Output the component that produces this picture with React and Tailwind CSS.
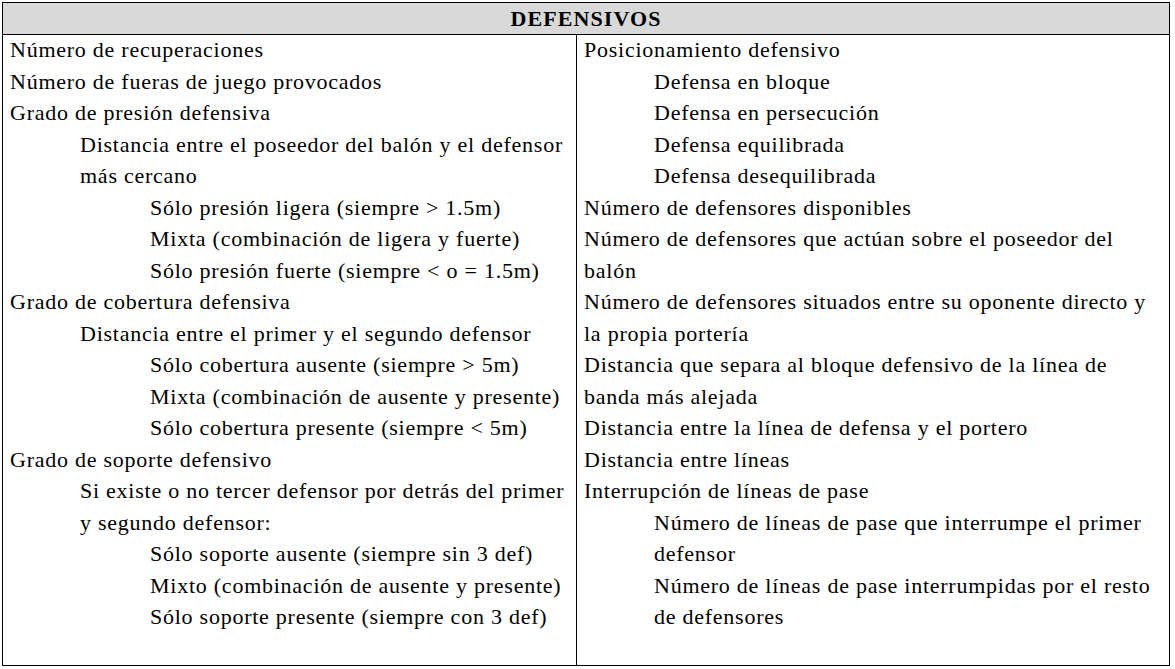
const left = [
  { lvl: 0, lines: ['Número de recuperaciones'] },
  { lvl: 0, lines: ['Número de fueras de juego provocados'] },
  { lvl: 0, lines: ['Grado de presión defensiva'] },
  { lvl: 1, lines: ['Distancia entre el poseedor del balón y el defensor', 'más cercano'] },
  { lvl: 2, lines: ['Sólo presión ligera (siempre > 1.5m)'] },
  { lvl: 2, lines: ['Mixta (combinación de ligera y fuerte)'] },
  { lvl: 2, lines: ['Sólo presión fuerte (siempre < o = 1.5m)'] },
  { lvl: 0, lines: ['Grado de cobertura defensiva'] },
  { lvl: 1, lines: ['Distancia entre el primer y el segundo defensor'] },
  { lvl: 2, lines: ['Sólo cobertura ausente (siempre > 5m)'] },
  { lvl: 2, lines: ['Mixta (combinación de ausente y presente)'] },
  { lvl: 2, lines: ['Sólo cobertura presente (siempre < 5m)'] },
  { lvl: 0, lines: ['Grado de soporte defensivo'] },
  { lvl: 1, lines: ['Si existe o no tercer defensor por detrás del primer', 'y segundo defensor:'] },
  { lvl: 2, lines: ['Sólo soporte ausente (siempre sin 3 def)'] },
  { lvl: 2, lines: ['Mixto (combinación de ausente y presente)'] },
  { lvl: 2, lines: ['Sólo soporte presente (siempre con 3 def)'] },
];

const right = [
  { lvl: 0, lines: ['Posicionamiento defensivo'] },
  { lvl: 1, lines: ['Defensa en bloque'] },
  { lvl: 1, lines: ['Defensa en persecución'] },
  { lvl: 1, lines: ['Defensa equilibrada'] },
  { lvl: 1, lines: ['Defensa desequilibrada'] },
  { lvl: 0, lines: ['Número de defensores disponibles'] },
  { lvl: 0, lines: ['Número de defensores que actúan sobre el poseedor del', 'balón'] },
  { lvl: 0, lines: ['Número de defensores situados entre su oponente directo y', 'la propia portería'] },
  { lvl: 0, lines: ['Distancia que separa al bloque defensivo de la línea de', 'banda más alejada'] },
  { lvl: 0, lines: ['Distancia entre la línea de defensa y el portero'] },
  { lvl: 0, lines: ['Distancia entre líneas'] },
  { lvl: 0, lines: ['Interrupción de líneas de pase'] },
  { lvl: 1, lines: ['Número de líneas de pase que interrumpe el primer', 'defensor'] },
  { lvl: 1, lines: ['Número de líneas de pase interrumpidas por el resto', 'de defensores'] },
];

const indent = ['pl-0', 'pl-[70px]', 'pl-[140px]'];

const Column = ({ items, className }) => (
  <div className={`flex flex-col pl-[7px] ${className}`}>
    {items.map((item, i) => (
      <div key={i} className={indent[item.lvl]}>
        {item.lines.map((line) => (
          <div key={line} className="whitespace-nowrap h-[31.5px] leading-[29.5px]">
            {line}
          </div>
        ))}
      </div>
    ))}
  </div>
);

export default function App() {
  return (
    <div className="w-[1175px] h-[669px] bg-white p-[2px] font-['Liberation_Serif',serif] text-[22px] tracking-[0.75px] text-black">
      <div className="w-[1168px] h-[664px] border border-black flex flex-col">
        <div className="h-[32px] bg-[#d9d9d9] border-b border-black flex items-center justify-center font-bold tracking-[1.1px]">
          DEFENSIVOS
        </div>
        <div className="flex flex-1">
          <Column items={left} className="w-[574px] border-r border-black" />
          <Column items={right} className="flex-1" />
        </div>
      </div>
    </div>
  );
}
